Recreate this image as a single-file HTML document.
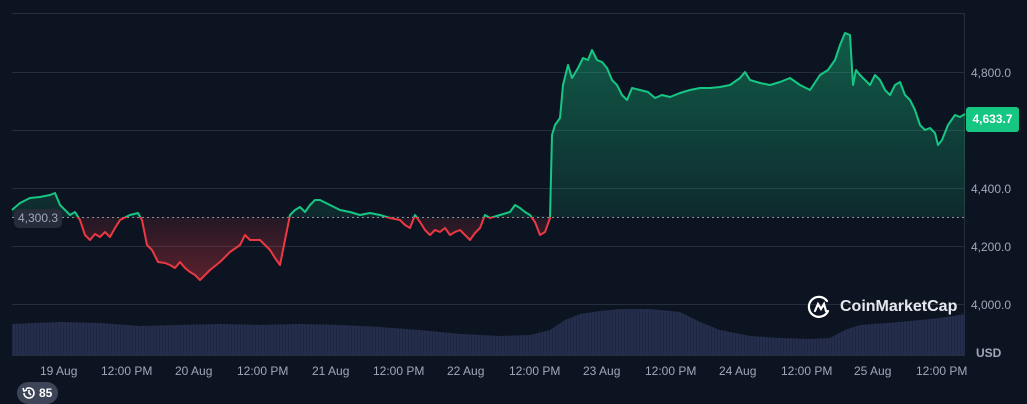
<!DOCTYPE html>
<html><head><meta charset="utf-8"><style>
body{margin:0;width:1027px;height:401px;background:#0d1421;overflow:hidden;font-family:"Liberation Sans",sans-serif;position:relative}
.t{position:absolute;font-size:12px;color:#a1a7bb}
.y{left:971px}
</style></head><body>
<svg width="1027" height="401" style="position:absolute;left:0;top:0">
<defs>
<linearGradient id="gg" x1="0" y1="0" x2="0" y2="1"><stop offset="0" stop-color="#16c784" stop-opacity="0.4"/><stop offset="1" stop-color="#16c784" stop-opacity="0.12"/></linearGradient>
<linearGradient id="rg" x1="0" y1="0" x2="0" y2="1"><stop offset="0" stop-color="#ea3943" stop-opacity="0.1"/><stop offset="1" stop-color="#ea3943" stop-opacity="0.35"/></linearGradient>
<pattern id="vp" width="3" height="10" patternUnits="userSpaceOnUse"><rect width="3" height="10" fill="#262e4e"/><rect width="1" height="10" fill="#1f2640"/></pattern>
<clipPath id="up"><rect x="0" y="0" width="1027" height="217"/></clipPath>
<clipPath id="dn"><rect x="0" y="217" width="1027" height="100"/></clipPath>
</defs>
<g stroke="#262d3b" stroke-width="1">
<line x1="12" y1="13.5" x2="965" y2="13.5"/><line x1="12" y1="72.5" x2="965" y2="72.5"/><line x1="12" y1="130.5" x2="965" y2="130.5"/><line x1="12" y1="188.5" x2="965" y2="188.5"/><line x1="12" y1="246.5" x2="965" y2="246.5"/><line x1="12" y1="304.5" x2="965" y2="304.5"/>
<line x1="964.5" y1="13" x2="964.5" y2="356"/><line x1="12" y1="355.5" x2="965" y2="355.5"/>
</g>
<polygon fill="url(#vp)" points="12,324 60,322 100,323 140,326 180,325 220,324 260,325 300,324 340,325 380,327 420,330 460,334 500,336 530,335 550,330 565,320 580,314 600,311 620,309 650,309 680,312 700,322 720,330 750,336 780,338 810,339 830,338 845,330 860,325 900,322 940,318 965,314 965,355 12,355"/>
<line x1="12" y1="217.5" x2="965" y2="217.5" stroke="#8c93a3" stroke-width="1" stroke-dasharray="2,3"/>
<g id="L">
<polyline id="pl" fill="none" stroke-width="2" stroke-linejoin="round" points="12,210 20,203 30,198 40,197 50,195 55,193 60,205 65,210 70,215 75,212 80,220 85,235 90,240 95,234 100,237 105,232 110,237 115,228 120,220 130,215 138,213 142,220 147,245 152,250 158,262 165,263 170,265 175,268 180,262 185,268 190,272 195,275 200,280 205,275 210,270 220,262 230,252 240,245 245,235 250,240 255,240 260,240 265,245 270,250 275,258 280,265 285,240 290,215 295,210 300,207 305,212 310,205 315,200 320,200 330,205 340,210 350,212 360,215 370,213 380,215 390,218 400,220 405,225 410,228 415,215 420,222 425,230 430,235 435,230 440,232 445,228 450,235 455,232 460,230 465,235 470,240 475,233 480,228 485,215 490,218 500,215 510,212 515,205 520,208 525,212 530,215 535,222 540,235 545,232 550,218 552,135 555,125 560,118 563,85 568,65 572,78 578,68 583,58 588,60 592,50 597,60 602,62 607,68 612,80 617,85 622,95 627,100 632,88 640,90 648,92 655,98 662,95 670,97 680,93 690,90 700,88 710,88 720,87 730,85 740,78 745,72 750,80 760,83 770,85 780,82 790,78 800,85 810,90 820,75 828,70 835,60 840,45 845,33 850,35 853,85 856,70 860,75 865,80 870,85 875,75 880,80 885,90 890,95 895,85 900,82 905,95 910,100 915,110 920,125 925,130 930,128 935,133 938,145 942,140 948,125 955,115 960,117 965,114"/>
</g>
<polygon fill="url(#gg)" clip-path="url(#up)" points="12,217 12,210 20,203 30,198 40,197 50,195 55,193 60,205 65,210 70,215 75,212 80,217 130,217 138,213 142,217 285,217 290,215 295,210 300,207 305,212 310,205 315,200 320,200 330,205 340,210 350,212 360,215 370,213 380,215 410,217 415,215 420,217 485,217 490,218 500,215 510,212 515,205 520,208 525,212 530,215 550,217 552,135 555,125 560,118 563,85 568,65 572,78 578,68 583,58 588,60 592,50 597,60 602,62 607,68 612,80 617,85 622,95 627,100 632,88 640,90 648,92 655,98 662,95 670,97 680,93 690,90 700,88 710,88 720,87 730,85 740,78 745,72 750,80 760,83 770,85 780,82 790,78 800,85 810,90 820,75 828,70 835,60 840,45 845,33 850,35 853,85 856,70 860,75 865,80 870,85 875,75 880,80 885,90 890,95 895,85 900,82 905,95 910,100 915,110 920,125 925,130 930,128 935,133 938,145 942,140 948,125 955,115 960,117 965,114 965,217"/>
<polygon fill="url(#rg)" clip-path="url(#dn)" points="70,217 80,220 85,235 90,240 95,234 100,237 105,232 110,237 115,228 120,220 130,217 142,220 147,245 152,250 158,262 165,263 170,265 175,268 180,262 185,268 190,272 195,275 200,280 205,275 210,270 220,262 230,252 240,245 245,235 250,240 255,240 260,240 265,245 270,250 275,258 280,265 285,240 290,217 380,217 390,218 400,220 405,225 410,228 415,217 420,222 425,230 430,235 435,230 440,232 445,228 450,235 455,232 460,230 465,235 470,240 475,233 480,228 485,217 530,217 535,222 540,235 545,232 550,218"/>
<use href="#pl" stroke="#16c784" clip-path="url(#up)"/>
<use href="#pl" stroke="#ea3943" clip-path="url(#dn)"/>
<g transform="translate(809,294)" fill="none" stroke="#fff" stroke-width="2.2" stroke-linecap="round">
<path d="M18,7 A10,10 0 1 0 19,17"/><path d="M6,17 L9,10 L12,15 L15,10 L17,17"/>
</g>
</svg>
<div style="position:absolute;left:840px;top:298px;font-size:16px;color:#e6e8ee;font-weight:bold">CoinMarketCap</div>
<div class="t y" style="top:66px">4,800.0</div>
<div class="t y" style="top:182px">4,400.0</div>
<div class="t y" style="top:240px">4,200.0</div>
<div class="t y" style="top:298px">4,000.0</div>
<div class="t" style="left:976px;top:346px;font-weight:bold">USD</div>
<div style="position:absolute;left:966px;top:107px;width:53px;height:25px;background:#16c784;border-radius:3px;color:#fff;font-size:12px;font-weight:bold;line-height:25px;text-align:center">4,633.7</div>
<div style="position:absolute;left:14px;top:209px;width:48px;height:19px;background:#262c39;border-radius:5px;color:#a1a7bb;font-size:12px;line-height:19px;text-align:center">4,300.3</div>
<div class="t" style="left:40px;top:364px">19 Aug</div>
<div class="t" style="left:101px;top:364px">12:00 PM</div>
<div class="t" style="left:175px;top:364px">20 Aug</div>
<div class="t" style="left:237px;top:364px">12:00 PM</div>
<div class="t" style="left:312px;top:364px">21 Aug</div>
<div class="t" style="left:373px;top:364px">12:00 PM</div>
<div class="t" style="left:447px;top:364px">22 Aug</div>
<div class="t" style="left:509px;top:364px">12:00 PM</div>
<div class="t" style="left:583px;top:364px">23 Aug</div>
<div class="t" style="left:645px;top:364px">12:00 PM</div>
<div class="t" style="left:719px;top:364px">24 Aug</div>
<div class="t" style="left:781px;top:364px">12:00 PM</div>
<div class="t" style="left:854px;top:364px">25 Aug</div>
<div class="t" style="left:916px;top:364px">12:00 PM</div>
<div style="position:absolute;left:17px;top:382px;width:41px;height:22px;background:#3d4457;border-radius:11px;color:#fff;font-size:12px;font-weight:bold;line-height:22px">
<svg width="14" height="14" style="position:absolute;left:5px;top:4px" fill="none" stroke="#fff" stroke-width="1.6"><path d="M2,7 A5,5 0 1 0 4,3"/><path d="M1,2 L2,5 L5,4"/><path d="M7,4 V7 L9,9"/></svg>
<span style="position:absolute;left:22px">85</span></div>
</body></html>
